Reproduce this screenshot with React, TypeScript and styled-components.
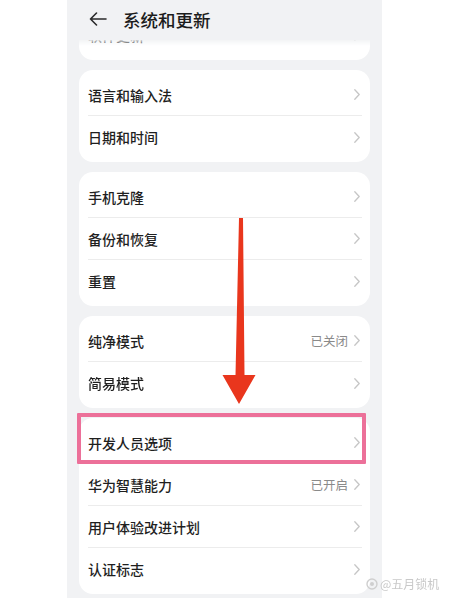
import React, {FC} from 'react';
import styled, {createGlobalStyle} from "styled-components";

const GlobalStyle = createGlobalStyle`
  html, body {
    margin: 0;
    padding: 0;
    background: #ffffff;
    font-family: "Noto Sans CJK SC", "Noto Sans", sans-serif;
  }
`

const Page = styled.div`
  position: relative;
  width: 449px;
  height: 600px;
  overflow: hidden;
  background: #ffffff;
`
const Screen = styled.div`
  margin-left: 67px;
  width: 315px;
  height: 598px;
  background: #f1f2f4;
  display: flex;
  flex-direction: column;
`
const Header = styled.div`
  height: 40px;
  flex-shrink: 0;
  display: flex;
  align-items: center;
  padding: 0 0 2px 22px;
  box-sizing: border-box;
  gap: 16px;
  background: #f1f2f4;
`
const Title = styled.h1`
  margin: 0;
  font-size: 17.5px;
  font-weight: 500;
  color: #1c1c1c;
`
const Viewport = styled.div`
  flex: 1;
  overflow: hidden;
  mask-image: linear-gradient(to bottom, rgba(0, 0, 0, 0.15) 0, #000 6px);
`
const List = styled.div`
  margin-top: -30px;
  padding: 0 12px;
  display: flex;
  flex-direction: column;
  gap: 10px;
`
const Card = styled.div`
  background: #ffffff;
  border-radius: 14px;
  padding: 4px 0;
`
const Row = styled.div`
  height: 42px;
  margin: 0 8px 0 9px;
  padding-right: 2px;
  display: flex;
  align-items: center;
  border-bottom: 1px solid #ececec;
  box-sizing: border-box;

  &:last-child {
    border-bottom: none;
  }
`
const Label = styled.span`
  flex: 1;
  font-size: 14px;
  font-weight: 500;
  color: #1f1f1f;
`
const Value = styled.span`
  font-size: 12.5px;
  color: #8a8a8a;
  margin-right: 6px;
`
const Highlight = styled.div`
  position: absolute;
  left: 77px;
  top: 413px;
  width: 289px;
  height: 51px;
  box-sizing: border-box;
  border: 4px solid #ec7099;
  border-radius: 1px;
`
const ArrowSvg = styled.svg`
  position: absolute;
  left: 220px;
  top: 214px;
`
const Watermark = styled.div`
  position: absolute;
  left: 366px;
  top: 575px;
  display: flex;
  align-items: center;
  gap: 2px;
  font-size: 12px;
  color: #c9c9c9;
  white-space: nowrap;
`

const Chevron: FC = () => (
    <svg width="6" height="11" viewBox="0 0 6 11">
        <polyline points="0.8,0.8 5.2,5.5 0.8,10.2" fill="none" stroke="#c6c6c6" strokeWidth="1.3"
                  strokeLinecap="round" strokeLinejoin="round"/>
    </svg>
)

const BackArrow: FC = () => (
    <svg width="18" height="14" viewBox="0 0 18 14">
        <path d="M17 7H1.5M7.5 1L1.5 7l6 6" fill="none" stroke="#2a2a2a" strokeWidth="1.6"
              strokeLinecap="round" strokeLinejoin="round"/>
    </svg>
)

interface Item {
    label: string,
    value?: string
}

const groups: Item[][] = [
    [{label: '软件更新'}],
    [{label: '语言和输入法'}, {label: '日期和时间'}],
    [{label: '手机克隆'}, {label: '备份和恢复'}, {label: '重置'}],
    [{label: '纯净模式', value: '已关闭'}, {label: '简易模式'}],
    [{label: '开发人员选项'}, {label: '华为智慧能力', value: '已开启'}, {label: '用户体验改进计划'}, {label: '认证标志'}],
]

const App: FC = () => {
    return (
        <Page>
            <GlobalStyle/>
            <Screen>
                <Header>
                    <BackArrow/>
                    <Title>系统和更新</Title>
                </Header>
                <Viewport>
                    <List>
                        {groups.map((group, gi) => (
                            <Card key={gi}>
                                {group.map(item => (
                                    <Row key={item.label}>
                                        <Label>{item.label}</Label>
                                        {item.value && <Value>{item.value}</Value>}
                                        <Chevron/>
                                    </Row>
                                ))}
                            </Card>
                        ))}
                    </List>
                </Viewport>
            </Screen>
            <ArrowSvg width="40" height="195" viewBox="0 0 40 195">
                <polygon points="19,4 23,4 24.5,161 35.5,161 19,190 2.5,161 15.5,161" fill="#e9361d"/>
            </ArrowSvg>
            <Highlight/>
            <Watermark>
                <svg width="12" height="12" viewBox="0 0 12 12">
                    <circle cx="6" cy="6" r="5" fill="none" stroke="#cfcfcf" strokeWidth="1.4"/>
                    <circle cx="6" cy="6" r="2" fill="#cfcfcf"/>
                </svg>
                <span>@五月锁机</span>
            </Watermark>
        </Page>
    );
};

export default App
